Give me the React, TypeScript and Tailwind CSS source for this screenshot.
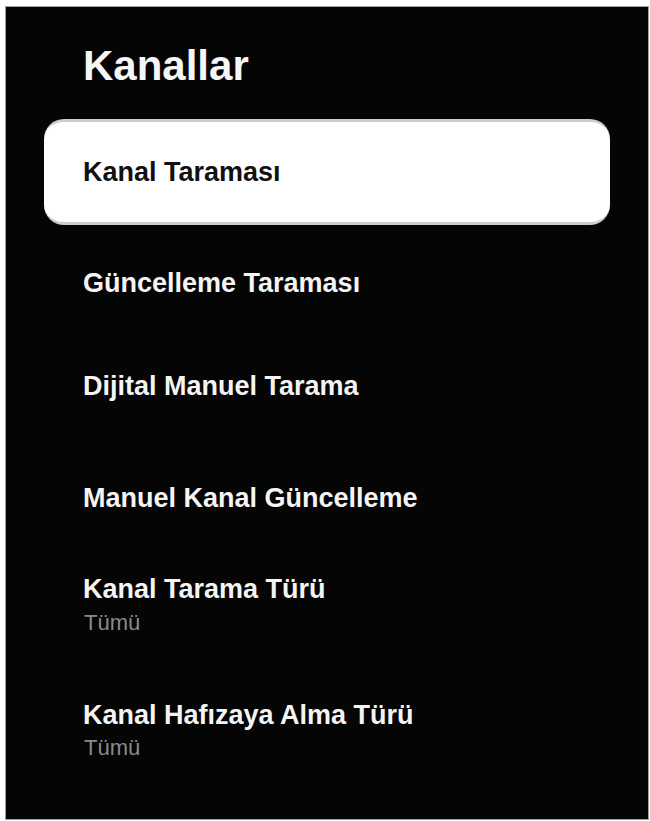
const font = { fontFamily: '"Liberation Sans", Arial, sans-serif' };

type Row = { label: string; value?: string; gap: string; valueGap?: string };

const rows: Row[] = [
  { label: "Güncelleme Taraması", gap: "mt-[43px]" },
  { label: "Dijital Manuel Tarama", gap: "mt-[73px]" },
  { label: "Manuel Kanal Güncelleme", gap: "mt-[82px]" },
  { label: "Kanal Tarama Türü", value: "Tümü", gap: "mt-[61px]", valueGap: "mt-[7px]" },
  { label: "Kanal Hafızaya Alma Türü", value: "Tümü", gap: "mt-[65px]", valueGap: "mt-[6px]" },
];

function MenuRow({ row }: { row: Row }) {
  return (
    <div className={row.gap}>
      <div className="pl-[77px] text-[27px] font-bold leading-[30px] text-[#f4f4f4]">{row.label}</div>
      {row.value && (
        <div className={`${row.valueGap} pl-[78px] text-[22px] leading-[24px] text-[#8a8a8a]`}>{row.value}</div>
      )}
    </div>
  );
}

export default function App() {
  return (
    <div className="h-[821px] w-[650px] bg-white pl-[5px] pt-[6px]" style={font}>
      <div className="h-[814px] w-[644px] border border-[#a0a0a0] bg-[#050505]">
        <h1 className="mt-[35px] pl-[77px] text-[42px] font-bold leading-[48px] text-[#f6f6f6]">Kanallar</h1>

        <div className="ml-[38px] mt-[29px] flex h-[106px] w-[566px] items-center rounded-[20px] border-y-[3px] border-[#cdcdcd] bg-white pl-[39px]">
          <span className="text-[27px] font-bold leading-[30px] text-[#111]">Kanal Taraması</span>
        </div>

        {rows.map((row) => (
          <MenuRow key={row.label} row={row} />
        ))}
      </div>
    </div>
  );
}
